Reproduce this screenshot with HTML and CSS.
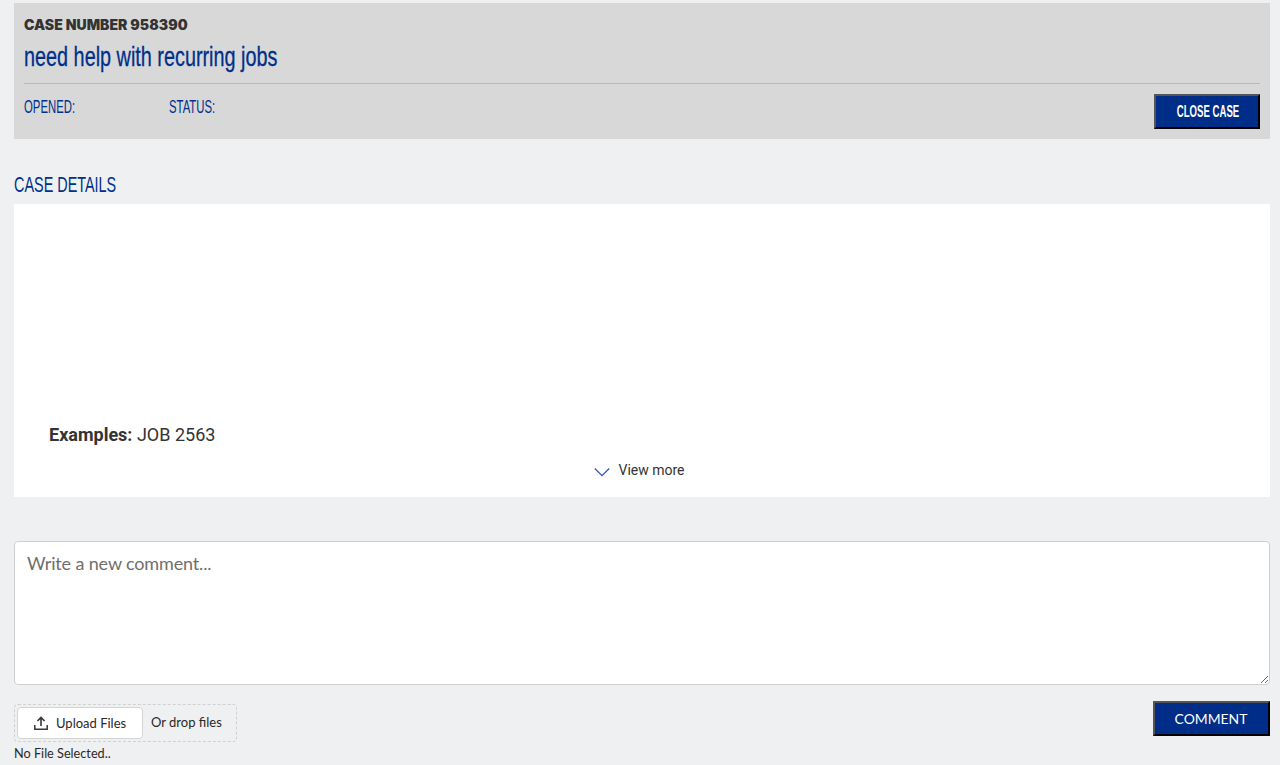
FILE: index.html
```html
<!DOCTYPE html>
<html lang="en">
<head>
<meta charset="utf-8">
<title>Case 958390</title>
<link rel="stylesheet" href="styles.css">
</head>
<body>
<main class="page">
  <section class="case-header">
    <div class="case-number">CASE NUMBER 958390</div>
    <h1 class="case-title"><span class="narrow-title">need help with recurring jobs</span></h1>
    <div class="case-meta">
      <div class="meta-items">
        <span class="meta-opened"><span class="narrow-meta">OPENED:</span></span>
        <span class="meta-status"><span class="narrow-meta">STATUS:</span></span>
      </div>
      <button class="btn-close" type="button"><span class="narrow-btn">CLOSE CASE</span></button>
    </div>
  </section>
  <h2 class="section-title"><span class="narrow-section">CASE DETAILS</span></h2>
  <section class="details">
    <p class="examples"><strong>Examples:</strong> JOB 2563</p>
    <div class="view-more">
      <svg class="chevron" width="16" height="10" viewBox="0 0 16 10" aria-hidden="true"><path d="M.8 1.5 8 8.7 15.2 1.5" fill="none" stroke="#3559a8" stroke-width="1.3"/></svg>
      <span>View more</span>
    </div>
  </section>
  <textarea class="comment" placeholder="Write a new comment..."></textarea>
  <div class="actions">
    <div class="upload-col">
      <div class="dropzone">
        <button class="btn-upload" type="button">
          <svg width="14" height="14" viewBox="0 0 14 14" aria-hidden="true"><path d="M7 10V2M3.4 5 7 1.4 10.6 5" fill="none" stroke="#3a3836" stroke-width="1.6"/><path d="M.8 9v4.2h12.4V9" fill="none" stroke="#3a3836" stroke-width="1.5"/></svg>
          <span>Upload Files</span>
        </button>
        <span class="drop-text">Or drop files</span>
      </div>
      <div class="no-file">No File Selected..</div>
    </div>
    <button class="btn-comment" type="button">COMMENT</button>
  </div>
</main>
</body>
</html>
```
FILE: styles.css
```css
* { box-sizing: border-box; }
html, body { margin: 0; height: 100%; }
body { background: #eff0f2; overflow: hidden; font-family: "Lato", sans-serif; color: #2b2826; }
.page { padding: 3px 10px 0 14px; }
.case-header { background: #d8d8d8; height: 136px; padding: 12px 10px 0; }
.case-number { font-family: "Inter", sans-serif; font-weight: 900; font-size: 14px; line-height: 20px; color: #333; letter-spacing: 0.05px; }
.case-title { margin: 6px 0 0; font-family: "Liberation Sans", sans-serif; font-weight: 400; font-size: 28px; line-height: 32px; color: #00308a; height: 37px; white-space: nowrap; }
.narrow-title { display: inline-block; transform: scaleX(0.708); transform-origin: left center; -webkit-text-stroke: 0.3px #00308a; }
.case-meta { border-top: 1px solid #b9b9b9; margin-top: 5px; display: flex; justify-content: space-between; align-items: flex-start; }
.meta-items { display: flex; font-family: "Liberation Sans", sans-serif; font-size: 18px; line-height: 22px; color: #00308a; padding-top: 12px; }
.meta-opened { width: 145px; }
.narrow-meta { display: inline-block; transform: scaleX(0.63); transform-origin: left center; }
.btn-close { margin-top: 10px; width: 106px; height: 35px; padding: 1px 2px 0 0; background: #002d87; color: #fff; border: 2px solid; border-color: #555 #000 #000 #555; font-family: "Liberation Sans", sans-serif; font-weight: 700; font-size: 16px; white-space: nowrap; }
.narrow-btn { display: inline-block; transform: scaleX(0.6); }
.section-title { margin: 33px 0 0; font-family: "Liberation Sans", sans-serif; font-weight: 400; font-size: 22px; line-height: 26px; height: 32px; color: #00308a; white-space: nowrap; }
.narrow-section { display: inline-block; transform: scaleX(0.655); transform-origin: left center; }
.details { background: #fff; height: 293px; padding-top: 220px; }
.examples { margin: 0 0 0 35px; font-family: "Roboto", sans-serif; font-size: 18px; line-height: 22px; color: #333; }
.examples strong { font-weight: 700; }
.view-more { display: flex; justify-content: center; align-items: center; gap: 8px; margin-top: 14px; padding-right: 5px; font-family: "Roboto", sans-serif; font-size: 14px; line-height: 20px; color: #333; }
.chevron { margin-top: 3px; }
.comment { display: block; width: 100%; height: 144px; margin-top: 44px; padding: 10px 12px; background: #fff; border: 1px solid #cfcfcf; border-radius: 4px; font-family: "Lato", sans-serif; font-size: 18px; line-height: 22px; letter-spacing: -0.14px; outline: 0; }
.comment::placeholder { color: #706e6b; opacity: 1; }
.actions { display: flex; justify-content: space-between; align-items: flex-start; margin-top: 16px; }
.upload-col { margin-top: 3px; }
.dropzone { display: flex; align-items: center; width: 223px; height: 38px; padding-left: 2px; border: 1px dashed #d0d0d0; border-radius: 4px; }
.btn-upload { display: flex; align-items: center; gap: 8px; width: 126px; height: 32px; padding: 0 0 0 16px; background: #fff; border: 1px solid #d4d4d4; border-radius: 4px; font-family: "Lato", sans-serif; font-size: 13px; color: #2b2826; }
.drop-text { margin-left: 8px; font-size: 13px; line-height: 20px; padding-bottom: 2px; }
.no-file { font-size: 12.7px; line-height: 20px; margin-top: 1px; white-space: nowrap; }
.btn-comment { width: 117px; height: 35px; background: #002d87; color: #fff; border: 2px solid; border-color: #555 #000 #000 #555; font-family: "Lato", sans-serif; font-size: 13.9px; padding: 0 1px 0 0; }
```
